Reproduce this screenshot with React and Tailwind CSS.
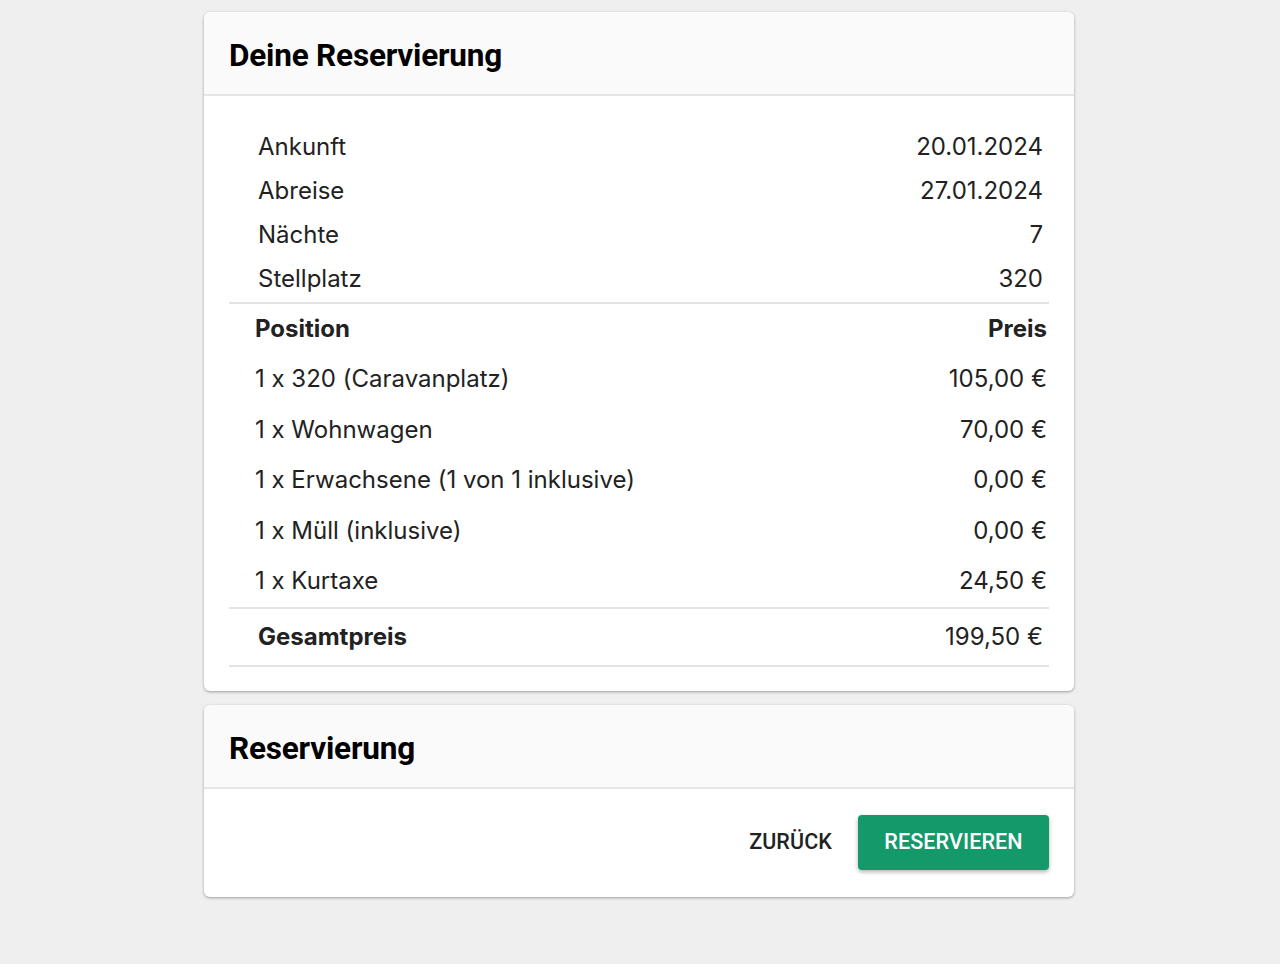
export default function App() {
    const info = [
        ['Ankunft', '20.01.2024'],
        ['Abreise', '27.01.2024'],
        ['Nächte', '7'],
        ['Stellplatz', '320']
    ];
    const items = [
        ['1 x 320 (Caravanplatz)', '105,00 €'],
        ['1 x Wohnwagen', '70,00 €'],
        ['1 x Erwachsene (1 von 1 inklusive)', '0,00 €'],
        ['1 x Müll (inklusive)', '0,00 €'],
        ['1 x Kurtaxe', '24,50 €']
    ];

    return (
        <div className="min-h-[964px] bg-[#efefef] pt-3 font-['Inter',sans-serif] [font-feature-settings:'calt'_0] text-[#222]">
            <div className="ml-[204px] w-[870px]">
                <div className="bg-white rounded-md shadow-[0_1px_3px_rgba(0,0,0,0.35)] overflow-hidden">
                    <div className="h-[84px] bg-[#fafafa] border-b-2 border-[#e6e6e6] px-[25px] pt-[6px] flex items-center">
                        <h2 className="font-['Roboto',sans-serif] font-bold text-[31.5px] text-black tracking-[-0.2px]">Deine Reservierung</h2>
                    </div>
                    <div className="px-[25px] pt-[29px] pb-[24px]">
                        <div className="pl-[29px] pr-[6px] pb-[1px]">
                            {info.map(([k, v]) => (
                                <div key={k} className="h-[44px] flex items-center justify-between text-[24px]">
                                    <span>{k}</span>
                                    <span>{v}</span>
                                </div>
                            ))}
                        </div>
                        <div className="border-t-2 border-[#e3e3e3]" />
                        <div className="pl-[26px] pr-[2px]">
                            <div className="h-[50px] flex items-center justify-between text-[24px] font-bold">
                                <span>Position</span>
                                <span>Preis</span>
                            </div>
                            {items.map(([k, v], i) => (
                                <div key={i} className="h-[50.5px] flex items-center justify-between text-[24px]">
                                    <span>{k}</span>
                                    <span>{v}</span>
                                </div>
                            ))}
                        </div>
                        <div className="border-t-2 border-[#e3e3e3]" />
                        <div className="h-[56px] pl-[29px] pr-[6px] flex items-center justify-between text-[24px]">
                            <span className="font-bold">Gesamtpreis</span>
                            <span>199,50 €</span>
                        </div>
                        <div className="border-t-2 border-[#e3e3e3]" />
                    </div>
                </div>

                <div className="mt-[14px] bg-white rounded-md shadow-[0_1px_3px_rgba(0,0,0,0.35)] overflow-hidden">
                    <div className="h-[84px] bg-[#fafafa] border-b-2 border-[#e6e6e6] px-[25px] pt-[6px] flex items-center">
                        <h2 className="font-['Roboto',sans-serif] font-bold text-[31.5px] text-black tracking-[-0.2px]">Reservierung</h2>
                    </div>
                    <div className="h-[108px] px-[25px] flex items-center justify-end gap-[26px] font-['Roboto',sans-serif] font-medium text-[21.5px]">
                        <button className="text-[#222] tracking-[0.1px]">ZURÜCK</button>
                        <button className="h-[55px] w-[191px] rounded-[4px] bg-[#13996a] text-white tracking-[0.1px] shadow-[0_2px_4px_rgba(0,0,0,0.3)]">
                            RESERVIEREN
                        </button>
                    </div>
                </div>
            </div>
        </div>
    );
}
